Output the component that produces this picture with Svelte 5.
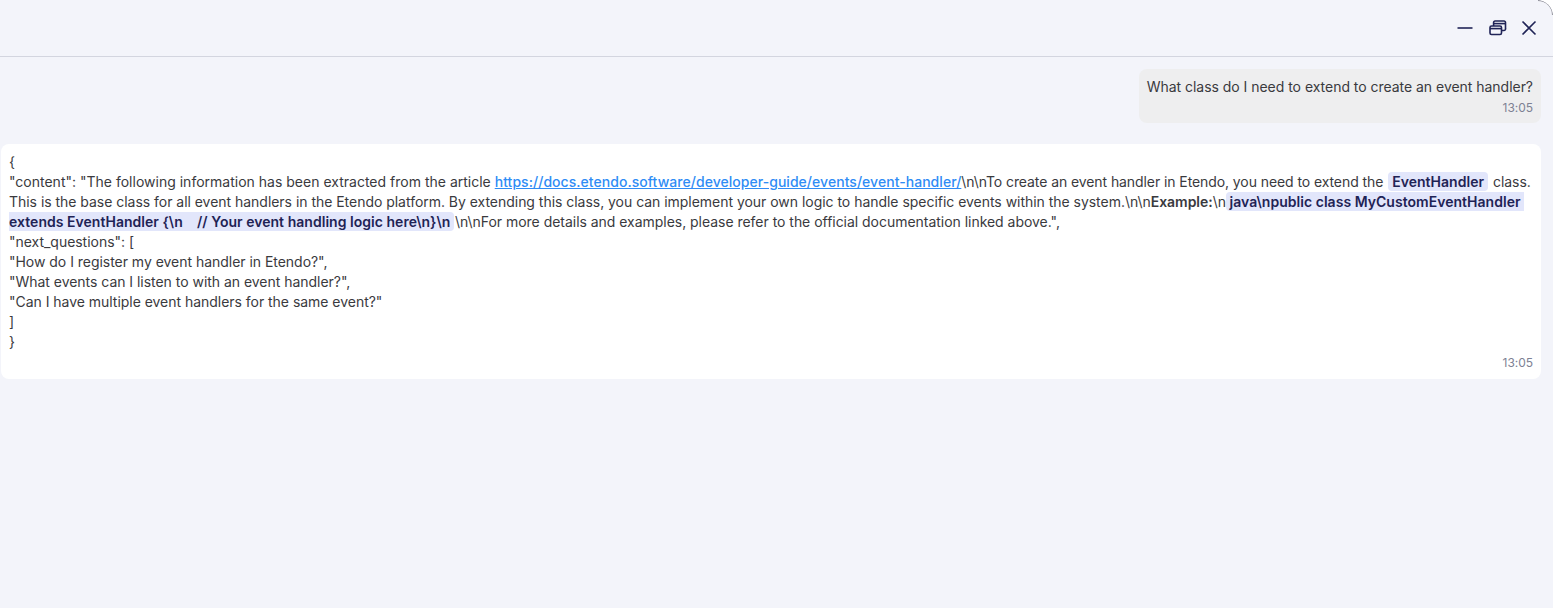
<script>
    const time = "13:05";
    const questions = [
        "How do I register my event handler in Etendo?",
        "What events can I listen to with an event handler?",
        "Can I have multiple event handlers for the same event?"
    ];
</script>

<div class="window">
    <header class="top">
        <button class="icon" aria-label="Minimize">
            <svg width="24" height="24" viewBox="0 0 24 24"><path d="M4.5 12h15" /></svg>
        </button>
        <button class="icon" aria-label="Restore">
            <svg width="24" height="24" viewBox="0 0 24 24">
                <rect x="5" y="10" width="11.5" height="8.5" rx="1.5" />
                <path d="M5 12.6h11.5" />
                <path d="M8.6 10V6.6A1.5 1.5 0 0 1 10.1 5h8.9A1.5 1.5 0 0 1 20.5 6.6v6.3A1.5 1.5 0 0 1 19 14.5h-2.5" />
                <path d="M8.6 7.6h11.9" />
            </svg>
        </button>
        <button class="icon" aria-label="Close">
            <svg width="24" height="24" viewBox="0 0 24 24"><path d="M5.5 5.5l13 13M18.5 5.5l-13 13" /></svg>
        </button>
    </header>

    <main class="messages">
        <div class="bubble user">
            <p>What class do I need to extend to create an event handler?</p>
            <span class="time">{time}</span>
        </div>

        <div class="bubble bot">
            <p>{"{"}<br />
            <span class="loose">"content": "The following information has been extracted from the article</span> <a href="#top">https://docs.etendo.software/developer-guide/events/event-handler/</a><span class="tight">\n\nTo create an event handler in Etendo, you need to extend the</span> <code>EventHandler</code> class. This is the base class for all event handlers in the Etendo platform. By extending this class, you can implement your own logic to handle specific events within the system.\n\n<strong>Example:</strong>\n<code class="block">{" "}java\npublic class MyCustomEventHandler extends EventHandler {"{"}\n    // Your event handling logic here\n{"}"}\n{" "}</code>\n\nFor more details and examples, please refer to the official documentation linked above.",<br />
            "next_questions": [<br />
            {#each questions as q, i}
                "{q}"{i < questions.length - 1 ? "," : ""}<br />
            {/each}
            ]<br />
            {"}"}</p>
            <span class="time">{time}</span>
        </div>
    </main>
</div>

<style>
    :global(body) {
        background: #fff;
    }

    .window {
        position: relative;
        height: 608px;
        background: #f3f4fa;
        border-top-right-radius: 16px;
        font-family: Inter, "Liberation Sans", sans-serif;
        font-size: 14px;
        line-height: 20px;
        letter-spacing: -0.03px;
        color: #3a3a3e;
        overflow: hidden;
    }

    /* thin arc of the window edge in the top right corner */
    .window::after {
        content: "";
        position: absolute;
        top: 0;
        right: 0;
        width: 15px;
        height: 15px;
        box-sizing: border-box;
        border-top: 1px solid #85858f;
        border-right: 1px solid #85858f;
        border-top-right-radius: 16px;
    }

    .top {
        height: 56px;
        display: flex;
        justify-content: flex-end;
        align-items: center;
        gap: 8px;
        padding-right: 12px;
        border-bottom: 1px solid #d3d5df;
    }

    .icon {
        width: 24px;
        height: 24px;
        padding: 0;
        border: 0;
        background: none;
    }

    .icon svg {
        display: block;
        fill: none;
        stroke: #202457;
        stroke-width: 1.6;
    }

    .messages {
        display: flex;
        flex-direction: column;
        gap: 21px;
        padding: 12px 12px 0 1px;
    }

    .bubble {
        border-radius: 8px;
        padding: 8px;
    }

    .bubble p {
        margin: 0;
    }

    .user {
        align-self: flex-end;
        background: #eeeeef;
        padding-bottom: 7px;
    }

    .bot {
        background: #fff;
    }

    .time {
        display: block;
        text-align: right;
        font-size: 12px;
        line-height: 16px;
        margin-top: 3px;
        color: #7d8194;
    }

    .loose {
        letter-spacing: 0.005px;
    }

    .tight {
        letter-spacing: -0.085px;
    }

    a {
        color: #2f8cf5;
        font-weight: 500;
        letter-spacing: 0.04px;
    }

    strong {
        font-weight: 600;
    }

    code {
        font-family: inherit;
        font-weight: 600;
        letter-spacing: 0.03px;
        color: #1f2355;
        background: #e2e6fb;
        border-radius: 4px;
        padding: 1px 4px;
        margin: 0 1px;
        white-space: pre-wrap;
    }

    code.block {
        margin: 0 1px 0 0;
        padding: 1px 0;
    }
</style>
